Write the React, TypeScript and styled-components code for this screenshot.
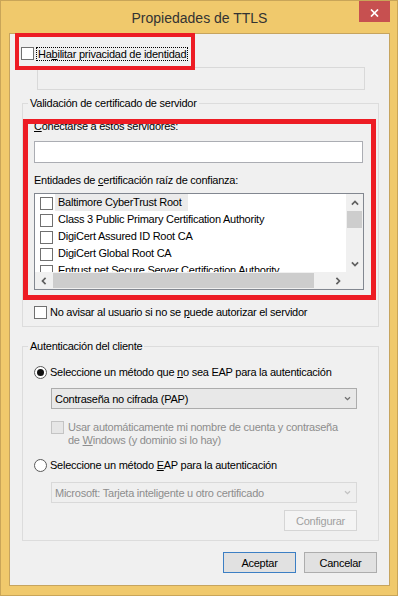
import React from 'react';
import styled, { createGlobalStyle } from 'styled-components';

const GlobalStyle = createGlobalStyle`
  html, body {
    margin: 0;
    padding: 0;
  }
  body {
    font-family: "Liberation Sans", Arial, sans-serif;
    font-size: 11px;
    letter-spacing: -0.25px;
    color: #000;
    background: #fff;
  }
  * {
    box-sizing: border-box;
  }
  u {
    text-decoration: underline;
    text-underline-offset: 1px;
  }
`;

const Window = styled.div`
  width: 398px;
  height: 596px;
  display: flex;
  flex-direction: column;
  padding: 0 7px 9px 8px;
  background: #f0c96c;
  border: 1px solid #c9a558;
`;

const TitleBar = styled.div`
  height: 32px;
  flex-shrink: 0;
  display: grid;
  grid-template-columns: 1fr auto 1fr;
  align-items: start;
`;

const Title = styled.div`
  grid-column: 2;
  padding-top: 3px;
  line-height: 28px;
  font-size: 14px;
  letter-spacing: 0;
  color: #333;
  white-space: nowrap;
`;

const CloseButton = styled.div`
  grid-column: 3;
  justify-self: end;
  width: 31px;
  height: 21px;
  display: flex;
  align-items: center;
  justify-content: center;
  padding-top: 2px;
  background: #c75050;
`;

const Panel = styled.div`
  flex: 1;
  display: flex;
  flex-direction: column;
  align-items: flex-start;
  background: #f0f0f0;
  border: 1px solid #c6a45e;
`;

// red annotation frame, drawn over whatever it wraps
const Highlight = styled.div<{ $w: number }>`
  position: relative;
  padding: ${p => p.$w}px;
  &::after {
    content: '';
    position: absolute;
    inset: 0;
    border: ${p => p.$w}px solid #ed1c24;
    pointer-events: none;
  }
`;

const PrivacyBox = styled(Highlight)`
  width: 180px;
  height: 37px;
  margin: -1px 0 0 5px;
`;

const PrivacyRow = styled.div`
  display: flex;
  align-items: center;
  height: 29px;
  padding: 4px 0 0 2px;
  white-space: nowrap;
`;

const FocusLabel = styled.span`
  margin-left: 2px;
  padding: 0 1px;
  line-height: 12px;
  border: 1px dotted #000;
`;

const CheckBox = styled.span<{ $disabled?: boolean }>`
  flex-shrink: 0;
  width: 13px;
  height: 13px;
  border: 1px solid ${p => (p.$disabled ? '#c4c4c4' : '#707070')};
  background: ${p => (p.$disabled ? '#e6e6e6' : '#fff')};
`;

const Radio = styled.span<{ $checked?: boolean }>`
  flex-shrink: 0;
  width: 13px;
  height: 13px;
  border-radius: 50%;
  border: 1px solid #5a5a5a;
  background: #fff;
  display: flex;
  align-items: center;
  justify-content: center;
  &::after {
    content: '';
    width: 7px;
    height: 7px;
    border-radius: 50%;
    background: ${p => (p.$checked ? '#111' : 'transparent')};
  }
`;

const PseudonymInput = styled.div`
  width: 328px;
  height: 23px;
  margin: -3px 0 0 27px;
  border: 1px solid #d9d9d9;
  background: #f0f0f0;
`;

const GroupBox = styled.fieldset<{ $top: number }>`
  width: 357px;
  min-width: 0;
  margin: ${p => p.$top}px 0 0 12px;
  padding: 0;
  border: 1px solid #dcdcdc;
  display: flex;
  flex-direction: column;
  align-items: flex-start;
`;

const GroupTitle = styled.legend`
  margin-left: 5px;
  padding: 0 2px;
  line-height: 14px;
  white-space: nowrap;
`;

const ServersBox = styled(Highlight)`
  width: 353px;
  margin-top: 9px;
  display: flex;
  flex-direction: column;
  align-items: flex-start;
`;

const FieldLabel = styled.div<{ $top: number }>`
  margin: ${p => p.$top}px 0 0 6px;
  line-height: 14px;
  white-space: nowrap;
`;

const TextInput = styled.div`
  width: 329px;
  height: 22px;
  margin: 8px 0 0 6px;
  border: 1px solid #abadb3;
  background: #fff;
`;

const ListBox = styled.div`
  width: 330px;
  height: 97px;
  margin: 6px 0 5px 6px;
  border: 1px solid #828790;
  background: #fff;
  display: grid;
  grid-template-columns: 1fr 17px;
  grid-template-rows: 1fr 17px;
`;

const ListItems = styled.div`
  grid-area: 1 / 1;
  overflow: hidden;
  display: flex;
  flex-direction: column;
`;

const ListItem = styled.div`
  flex-shrink: 0;
  display: flex;
  align-items: flex-start;
  height: 17px;
  padding-left: 5px;
  white-space: nowrap;
  & > ${CheckBox} {
    margin-top: 3px;
  }
`;

const ItemText = styled.span<{ $selected?: boolean }>`
  margin-left: 2px;
  padding: 0 6px 0 3px;
  line-height: 17px;
  background: ${p => (p.$selected ? '#ebebeb' : 'transparent')};
`;

const ScrollV = styled.div`
  grid-area: 1 / 2;
  display: flex;
  flex-direction: column;
  background: #f0f0f0;
`;

const ScrollH = styled.div`
  grid-area: 2 / 1;
  display: flex;
  background: #f0f0f0;
`;

const ScrollCorner = styled.div`
  grid-area: 2 / 2;
  background: #f0f0f0;
`;

const ScrollArrow = styled.div`
  flex-shrink: 0;
  width: 17px;
  height: 17px;
  display: flex;
  align-items: center;
  justify-content: center;
`;

const ThumbV = styled.div`
  flex-shrink: 0;
  height: 17px;
  margin: 0 1px;
  background: #cdcdcd;
`;

const ThumbH = styled.div`
  flex-shrink: 0;
  width: 261px;
  margin: 1px 0 1px 1px;
  background: #cdcdcd;
`;

const Track = styled.div`
  flex: 1;
`;

const OptionRow = styled.div<{ $top: number; $indent: number; $bottom?: number }>`
  display: flex;
  align-items: center;
  gap: 3px;
  margin: ${p => p.$top}px 0 ${p => p.$bottom ?? 0}px ${p => p.$indent}px;
  line-height: 13px;
  white-space: nowrap;
`;

const CredentialsRow = styled.div`
  display: flex;
  align-items: flex-start;
  gap: 4px;
  margin: 12px 0 0 28px;
  line-height: 13px;
  color: #8d8d8d;
  white-space: nowrap;
`;

const Combo = styled.div<{ $disabled?: boolean; $top: number }>`
  width: 306px;
  height: 21px;
  margin: ${p => p.$top}px 0 0 28px;
  padding: 0 5px 0 3px;
  display: flex;
  align-items: center;
  justify-content: space-between;
  white-space: nowrap;
  border: 1px solid ${p => (p.$disabled ? '#d9d9d9' : '#acacac')};
  background: ${p => (p.$disabled ? '#efefef' : '#e8e8e8')};
  color: ${p => (p.$disabled ? '#8d8d8d' : '#000')};
`;

const Button = styled.div<{ $kind: 'default' | 'normal' | 'disabled' }>`
  flex-shrink: 0;
  width: 73px;
  height: 21px;
  display: flex;
  align-items: center;
  justify-content: center;
  white-space: nowrap;
  border: 1px solid
    ${p => (p.$kind === 'default' ? '#3c7fc4' : p.$kind === 'disabled' ? '#d5d5d5' : '#adadad')};
  background: ${p => (p.$kind === 'disabled' ? '#f4f4f4' : '#e1e1e1')};
  color: ${p => (p.$kind === 'disabled' ? '#a0a0a0' : '#000')};
`;

const ConfigureButton = styled(Button)`
  align-self: flex-end;
  margin: 7px 21px 9px 0;
`;

const Footer = styled.div`
  align-self: stretch;
  display: flex;
  justify-content: flex-end;
  gap: 8px;
  margin: 11px 12px 0 0;
`;

const ChevronSvg = styled.svg<{ $rot: number }>`
  transform: rotate(${p => p.$rot}deg);
`;

const Chevron: React.FC<{ dir: 'up' | 'down' | 'left' | 'right'; color?: string; small?: boolean }> = ({
  dir,
  color = '#606060',
  small
}) => {
  const rot = { up: 0, right: 90, down: 180, left: 270 }[dir];
  return small ? (
    <ChevronSvg $rot={rot} width="7" height="7" viewBox="0 0 7 7">
      <path d="M1 4.8 L3.5 2.3 L6 4.8" fill="none" stroke={color} strokeWidth="1.3" />
    </ChevronSvg>
  ) : (
    <ChevronSvg $rot={rot} width="8" height="8" viewBox="0 0 8 8">
      <path d="M0.9 5.6 L4 2.5 L7.1 5.6" fill="none" stroke={color} strokeWidth="1.7" />
    </ChevronSvg>
  );
};

const authorities = [
  'Baltimore CyberTrust Root',
  'Class 3 Public Primary Certification Authority',
  'DigiCert Assured ID Root CA',
  'DigiCert Global Root CA',
  'Entrust.net Secure Server Certification Authority'
];

export default function App() {
  return (
    <>
      <GlobalStyle />
      <Window>
        <TitleBar>
          <Title>Propiedades de TTLS</Title>
          <CloseButton>
            <svg width="9" height="8" viewBox="0 0 9 8">
              <path d="M1 0.5 L8 7.5 M8 0.5 L1 7.5" stroke="#fff" strokeWidth="1.7" />
            </svg>
          </CloseButton>
        </TitleBar>

        <Panel>
          <PrivacyBox $w={4}>
            <PrivacyRow>
              <CheckBox />
              <FocusLabel>
                Ha<u>b</u>ilitar privacidad de identidad
              </FocusLabel>
            </PrivacyRow>
          </PrivacyBox>
          <PseudonymInput />

          <GroupBox $top={6}>
            <GroupTitle>Validación de certificado de servidor</GroupTitle>
            <ServersBox $w={5}>
              <FieldLabel $top={-5}>
                <u>C</u>onectarse a estos servidores:
              </FieldLabel>
              <TextInput />
              <FieldLabel $top={10}>
                Entidades de <u>c</u>ertificación raíz de confianza:
              </FieldLabel>
              <ListBox>
                <ListItems>
                  {authorities.map((name, i) => (
                    <ListItem key={name}>
                      <CheckBox />
                      <ItemText $selected={i === 0}>{name}</ItemText>
                    </ListItem>
                  ))}
                </ListItems>
                <ScrollV>
                  <ScrollArrow>
                    <Chevron dir="up" />
                  </ScrollArrow>
                  <ThumbV />
                  <Track />
                  <ScrollArrow>
                    <Chevron dir="down" />
                  </ScrollArrow>
                </ScrollV>
                <ScrollH>
                  <ScrollArrow>
                    <Chevron dir="left" />
                  </ScrollArrow>
                  <ThumbH />
                  <Track />
                  <ScrollArrow>
                    <Chevron dir="right" />
                  </ScrollArrow>
                </ScrollH>
                <ScrollCorner />
              </ListBox>
            </ServersBox>
            <OptionRow $top={6} $indent={11} $bottom={7}>
              <CheckBox />
              <span>
                No avisar al usuario si no se <u>p</u>uede autorizar el servidor
              </span>
            </OptionRow>
          </GroupBox>

          <GroupBox $top={12}>
            <GroupTitle>Autenticación del cliente</GroupTitle>
            <OptionRow $top={13} $indent={11}>
              <Radio $checked />
              <span>
                Seleccione un método que <u>n</u>o sea EAP para la autenticación
              </span>
            </OptionRow>
            <Combo $top={9}>
              <span>Contraseña no cifrada (PAP)</span>
              <Chevron dir="down" color="#707070" small />
            </Combo>
            <CredentialsRow>
              <CheckBox $disabled />
              <span>
                Usar automáticamente mi nombre de cuenta y contraseña
                <br />
                de <u>W</u>indows (y dominio si lo hay)
              </span>
            </CredentialsRow>
            <OptionRow $top={12} $indent={11}>
              <Radio />
              <span>
                Seleccione un método <u>E</u>AP para la autenticación
              </span>
            </OptionRow>
            <Combo $top={10} $disabled>
              <span>Microsoft: Tarjeta inteligente u otro certificado</span>
              <Chevron dir="down" color="#c2c2c2" small />
            </Combo>
            <ConfigureButton $kind="disabled">
              <span>
                Confi<u>g</u>urar
              </span>
            </ConfigureButton>
          </GroupBox>

          <Footer>
            <Button $kind="default">Aceptar</Button>
            <Button $kind="normal">Cancelar</Button>
          </Footer>
        </Panel>
      </Window>
    </>
  );
}
